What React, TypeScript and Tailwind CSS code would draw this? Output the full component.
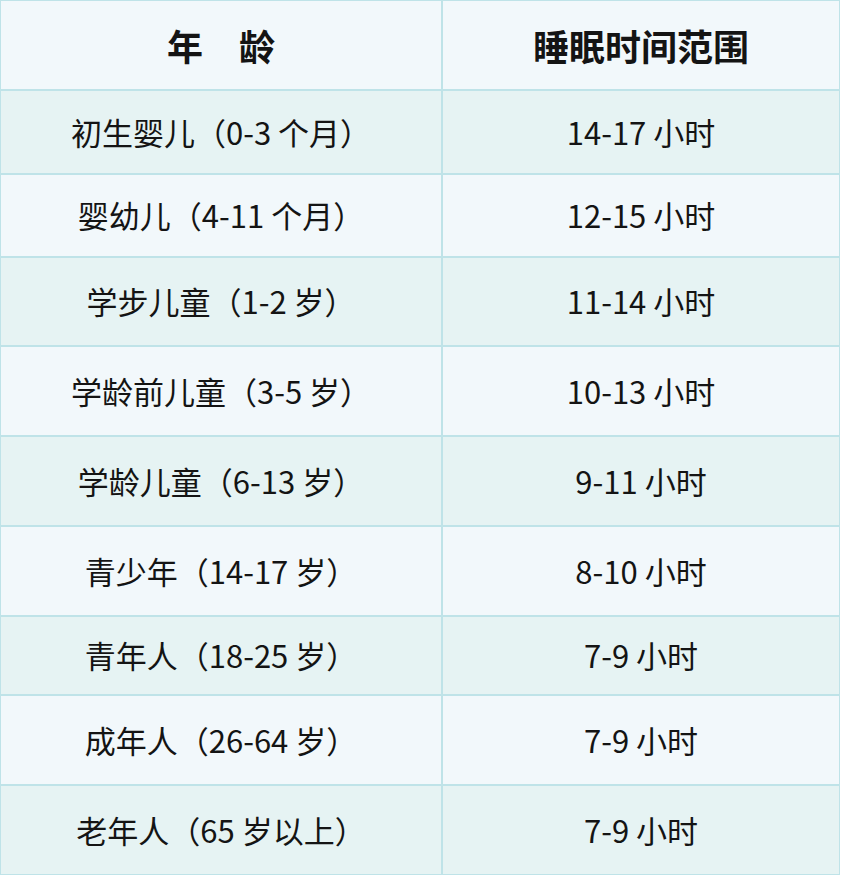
import React from "react";

// 年龄 / 睡眠时间 rows; h = row height in px, measured from the reference
const rows = [
  { age: "初生婴儿（0-3 个月）", sleep: "14-17 小时", h: "h-[82px]" },
  { age: "婴幼儿（4-11 个月）", sleep: "12-15 小时", h: "h-[81px]" },
  { age: "学步儿童（1-2 岁）", sleep: "11-14 小时", h: "h-[87px]" },
  { age: "学龄前儿童（3-5 岁）", sleep: "10-13 小时", h: "h-[88px]" },
  { age: "学龄儿童（6-13 岁）", sleep: "9-11 小时", h: "h-[88px]" },
  { age: "青少年（14-17 岁）", sleep: "8-10 小时", h: "h-[88px]" },
  { age: "青年人（18-25 岁）", sleep: "7-9 小时", h: "h-[77px]" },
  { age: "成年人（26-64 岁）", sleep: "7-9 小时", h: "h-[88px]" },
  { age: "老年人（65 岁以上）", sleep: "7-9 小时", h: "h-[88px]" },
];

const App = () => {
  return (
    <div
      className="w-[841px] bg-white"
      style={{ fontFamily: '"Noto Sans CJK SC", "Noto Sans", sans-serif' }}
    >
      <div className="grid w-[840px] grid-cols-[440px_396px] gap-[2px] bg-[#bfe3e8] p-px text-[#141414]">
        {/* Header */}
        <div className="flex h-[88px] items-center justify-center bg-[#f2f8fb] text-[36px] font-bold">
          年　龄
        </div>
        <div className="flex h-[88px] items-center justify-center bg-[#f2f8fb] text-[36px] font-bold">
          睡眠时间范围
        </div>

        {rows.map((row, i) => {
          const bg = i % 2 === 0 ? "bg-[#e6f3f3]" : "bg-[#f2f8fb]";
          return (
            <React.Fragment key={row.age}>
              <div className={`flex items-center justify-center text-[31px] ${row.h} ${bg}`}>
                {row.age}
              </div>
              <div className={`flex items-center justify-center text-[31px] ${row.h} ${bg}`}>
                {row.sleep}
              </div>
            </React.Fragment>
          );
        })}
      </div>
    </div>
  );
};

export default App;
